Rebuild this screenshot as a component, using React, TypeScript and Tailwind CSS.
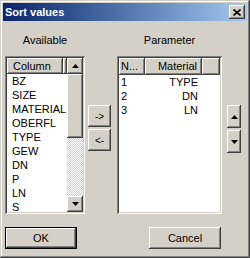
import React from 'react';

const raised =
  'bg-[#d4d0c8] shadow-[inset_-1px_-1px_0_#404040,inset_1px_1px_0_#ffffff,inset_-2px_-2px_0_#808080,inset_2px_2px_0_#d4d0c8]';
const sunken =
  'shadow-[inset_1px_1px_0_#808080,inset_-1px_-1px_0_#ffffff,inset_2px_2px_0_#404040,inset_-2px_-2px_0_#d4d0c8]';
const headerCell =
  'bg-[#d4d0c8] shadow-[inset_-1px_-1px_0_#404040,inset_1px_1px_0_#ffffff,inset_-2px_-2px_0_#808080]';

const available = ['BZ', 'SIZE', 'MATERIAL', 'OBERFL', 'TYPE', 'GEW', 'DN', 'P', 'LN', 'S'];
const params = [
  { n: '1', m: 'TYPE' },
  { n: '2', m: 'DN' },
  { n: '3', m: 'LN' },
];

const Arrow: React.FC<{ down?: boolean }> = ({ down }) => (
  <svg width="7" height="4" viewBox="0 0 7 4">
    {down ? <path d="M0 0h7L3.5 4z" fill="#000" /> : <path d="M0 4h7L3.5 0z" fill="#000" />}
  </svg>
);

const App: React.FC = () => {
  return (
    <div
      className="w-[250px] h-[258px] bg-[#d4d0c8] p-[3px] flex flex-col text-[11px] text-black select-none shadow-[inset_-1px_-1px_0_#404040,inset_1px_1px_0_#d4d0c8,inset_-2px_-2px_0_#808080,inset_2px_2px_0_#ffffff]"
      style={{ fontFamily: '"Liberation Sans", Arial, sans-serif' }}
    >
      {/* title bar */}
      <div className="h-[18px] flex items-center justify-between pl-[2px] pr-[2px] bg-gradient-to-r from-[#0a246a] to-[#a6caf0]">
        <span className="text-white font-bold text-[11px] leading-none">Sort values</span>
        <div className={`${raised} w-[16px] h-[14px] flex items-center justify-center`}>
          <svg width="8" height="7" viewBox="0 0 8 7">
            <path d="M0.5 0.5L7.5 6.5M7.5 0.5L0.5 6.5" stroke="#000" strokeWidth="1.6" />
          </svg>
        </div>
      </div>

      {/* labels */}
      <div className="flex mt-[13px] h-[13px] leading-[13px] pl-[2px]">
        <div className="w-[80px] text-center">Available</div>
        <div className="w-[32px]" />
        <div className="w-[105px] text-center">Parameter</div>
      </div>

      {/* lists */}
      <div className="flex mt-[9px] pl-[2px] h-[158px]">
        {/* available list */}
        <div className={`${sunken} w-[80px] h-full p-[2px] bg-white flex`}>
          <div className="flex-1 flex flex-col overflow-hidden">
            <div className="flex h-[17px] bg-[#d4d0c8]">
              <div className={`${headerCell} w-[56px] h-full pl-[6px] leading-[16px]`}>Column</div>
              <div className={`${headerCell} flex-1 h-full`} />
            </div>
            {available.map((a) => (
              <div key={a} className="h-[14px] leading-[14px] pl-[5px] shrink-0">
                {a}
              </div>
            ))}
          </div>
          <div className="w-[16px] h-full flex flex-col">
            <div className={`${raised} h-[16px] flex items-center justify-center`}>
              <Arrow />
            </div>
            <div className={`${raised} h-[64px]`} />
            <div className="flex-1 bg-[repeating-conic-gradient(#ffffff_0_25%,#d4d0c8_0_50%)] bg-[length:2px_2px]" />
            <div className={`${raised} h-[16px] flex items-center justify-center`}>
              <Arrow down />
            </div>
          </div>
        </div>

        {/* move buttons */}
        <div className="flex flex-col gap-[2px] ml-[3px] mt-[49px] w-[23px]">
          <div className={`${raised} h-[22px] flex items-center justify-center text-[10px]`}>-&gt;</div>
          <div className={`${raised} h-[22px] flex items-center justify-center text-[10px]`}>&lt;-</div>
        </div>

        {/* parameter list */}
        <div className={`${sunken} w-[105px] h-full p-[2px] bg-white ml-[6px] flex flex-col`}>
          <div className="flex h-[17px] bg-[#d4d0c8]">
            <div className={`${headerCell} w-[26px] h-full pl-[2px] leading-[16px] overflow-hidden whitespace-nowrap`}>N...</div>
            <div className={`${headerCell} w-[57px] h-full pr-[5px] text-right leading-[16px]`}>Material</div>
            <div className={`${headerCell} flex-1 h-full`} />
          </div>
          {params.map((p) => (
            <div key={p.n} className="flex h-[14px] leading-[14px]">
              <div className="w-[26px] pl-[2px]">{p.n}</div>
              <div className="w-[57px] pr-[4px] text-right">{p.m}</div>
            </div>
          ))}
        </div>

        {/* order buttons */}
        <div className="flex flex-col gap-[2px] ml-[5px] mt-[49px] w-[14px]">
          <div className={`${raised} h-[23px] flex items-center justify-center`}>
            <Arrow />
          </div>
          <div className={`${raised} h-[23px] flex items-center justify-center`}>
            <Arrow down />
          </div>
        </div>
      </div>

      {/* bottom buttons */}
      <div className="flex mt-[13px] pl-[2px]">
        <div className="w-[72px] h-[22px] border border-black">
          <div className={`${raised} w-full h-full flex items-center justify-center`}>OK</div>
        </div>
        <div className="w-[72px] h-[22px] ml-[72px]">
          <div className={`${raised} w-full h-full flex items-center justify-center`}>Cancel</div>
        </div>
      </div>
    </div>
  );
};

export default App;
